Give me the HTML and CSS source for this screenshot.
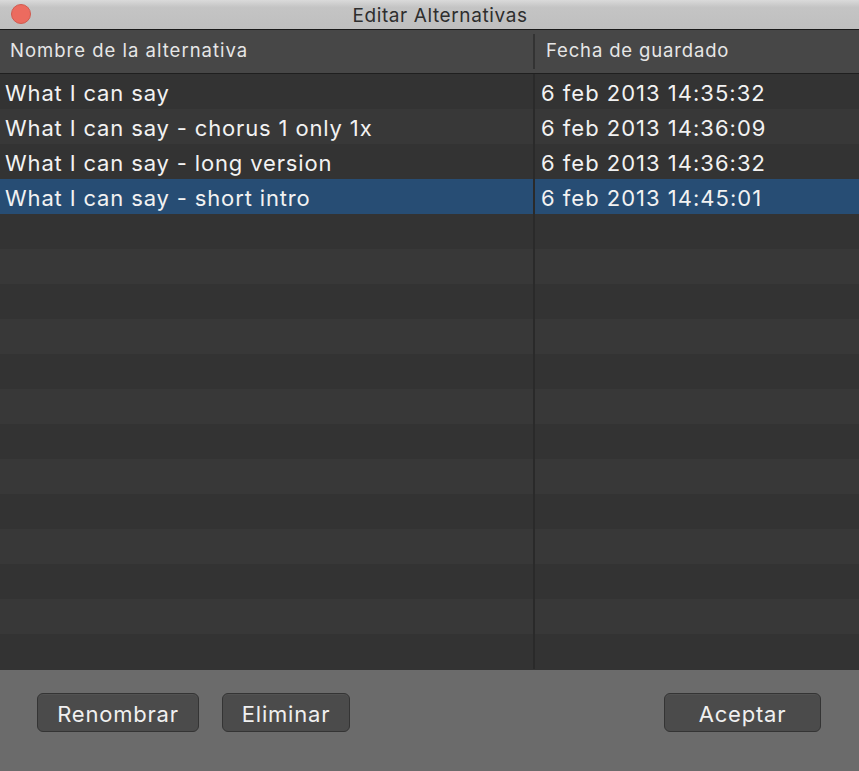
FILE: index.html
```html
<!DOCTYPE html>
<html lang="es">
<head>
<meta charset="utf-8">
<title>Editar Alternativas</title>
<link rel="stylesheet" href="styles.css">
</head>
<body>
<div class="window">
  <div class="titlebar">
    <span class="close"></span>
    <span class="title">Editar Alternativas</span>
  </div>
  <div class="table">
    <div class="thead">
      <div class="col col1 hcell">Nombre de la alternativa</div>
      <div class="col col2 hcell hcell2">Fecha de guardado</div>
    </div>
    <div class="tbody">
      <div class="row"><div class="col col1 cell">What I can say</div><div class="col col2 cell">6 feb 2013 14:35:32</div></div>
      <div class="row alt"><div class="col col1 cell">What I can say - chorus 1 only 1x</div><div class="col col2 cell">6 feb 2013 14:36:09</div></div>
      <div class="row"><div class="col col1 cell">What I can say - long version</div><div class="col col2 cell">6 feb 2013 14:36:32</div></div>
      <div class="row selected"><div class="col col1 cell">What I can say - short intro</div><div class="col col2 cell">6 feb 2013 14:45:01</div></div>
      <div class="row"><div class="col col1"></div><div class="col col2"></div></div>
      <div class="row alt"><div class="col col1"></div><div class="col col2"></div></div>
      <div class="row"><div class="col col1"></div><div class="col col2"></div></div>
      <div class="row alt"><div class="col col1"></div><div class="col col2"></div></div>
      <div class="row"><div class="col col1"></div><div class="col col2"></div></div>
      <div class="row alt"><div class="col col1"></div><div class="col col2"></div></div>
      <div class="row"><div class="col col1"></div><div class="col col2"></div></div>
      <div class="row alt"><div class="col col1"></div><div class="col col2"></div></div>
      <div class="row"><div class="col col1"></div><div class="col col2"></div></div>
      <div class="row alt"><div class="col col1"></div><div class="col col2"></div></div>
      <div class="row"><div class="col col1"></div><div class="col col2"></div></div>
      <div class="row alt"><div class="col col1"></div><div class="col col2"></div></div>
      <div class="row"><div class="col col1"></div><div class="col col2"></div></div>
    </div>
  </div>
  <div class="footer">
    <button class="btn btn-rename">Renombrar</button>
    <button class="btn btn-delete">Eliminar</button>
    <span class="spacer"></span>
    <button class="btn btn-ok">Aceptar</button>
  </div>
</div>
</body>
</html>
```

FILE: styles.css
```css
* { box-sizing: border-box; }
html, body { margin: 0; padding: 0; background: #6b6b6b; }
body { font-family: Inter, "Noto Sans", "Liberation Sans", sans-serif; }

.window {
  width: 859px;
  height: 771px;
  display: flex;
  flex-direction: column;
  overflow: hidden;
}

.titlebar {
  height: 30px;
  flex: none;
  display: flex;
  align-items: center;
  justify-content: center;
  position: relative;
  background: linear-gradient(#dadada, #c4c4c4 25%, #bfbfbf);
  border-bottom: 1px solid #1a1a1a;
}
.close {
  position: absolute;
  left: 11px;
  top: 4px;
  width: 20px;
  height: 20px;
  border-radius: 50%;
  background: #ec6b5f;
  border: 1px solid #d15a4f;
}
.title {
  font-size: 19px;
  color: #2e2e2e;
  letter-spacing: 0.6px;
  margin-left: 21px;
  padding-top: 2px;
}

.table {
  flex: 1;
  display: flex;
  flex-direction: column;
  background: #333333;
  overflow: hidden;
}
.thead {
  height: 44px;
  flex: none;
  display: flex;
  background: #474747;
  border-bottom: 1px solid #1f1f1f;
}
.col1 { width: 533px; flex: none; }
.col2 { flex: 1; border-left: 2px solid #2a2a2a; }
.hcell {
  font-size: 18.5px;
  color: #e6e6e6;
  letter-spacing: 1px;
  padding-left: 10px;
  line-height: 41px;
  white-space: nowrap;
}
.thead .col2 {
  border-left: 2px solid #333;
  margin: 4px 0 4px 0;
  line-height: 33px;
  padding-left: 11px;
  letter-spacing: 0.85px;
}

.tbody { flex: 1; overflow: hidden; }
.row {
  height: 35px;
  display: flex;
  background: #333333;
}
.row.alt { background: #383838; }
.row.selected { background: #274d74; }
.cell {
  font-size: 22px;
  color: #f2f2f2;
  letter-spacing: 0.85px;
  line-height: 35px;
  padding-top: 2px;
  padding-left: 5px;
  white-space: nowrap;
}
.row .col2.cell { padding-left: 6px; letter-spacing: 1px; }

.footer {
  height: 101px;
  flex: none;
  display: flex;
  align-items: flex-start;
  padding: 23px 38px 0 37px;
  gap: 23px;
  background: #6b6b6b;
}
.spacer { flex: 1; }
.btn {
  height: 39px;
  border-radius: 6px;
  background: #4b4b4b;
  border: 1px solid #343434;
  color: #f0f0f0;
  font-family: Inter, "Noto Sans", "Liberation Sans", sans-serif;
  font-size: 22px;
  letter-spacing: 0.8px;
  padding: 2px 0 0 0;
  box-shadow: inset 0 1px 0 rgba(255,255,255,0.04);
}
.btn-rename { width: 162px; }
.btn-delete { width: 128px; }
.btn-ok { width: 157px; }
```
